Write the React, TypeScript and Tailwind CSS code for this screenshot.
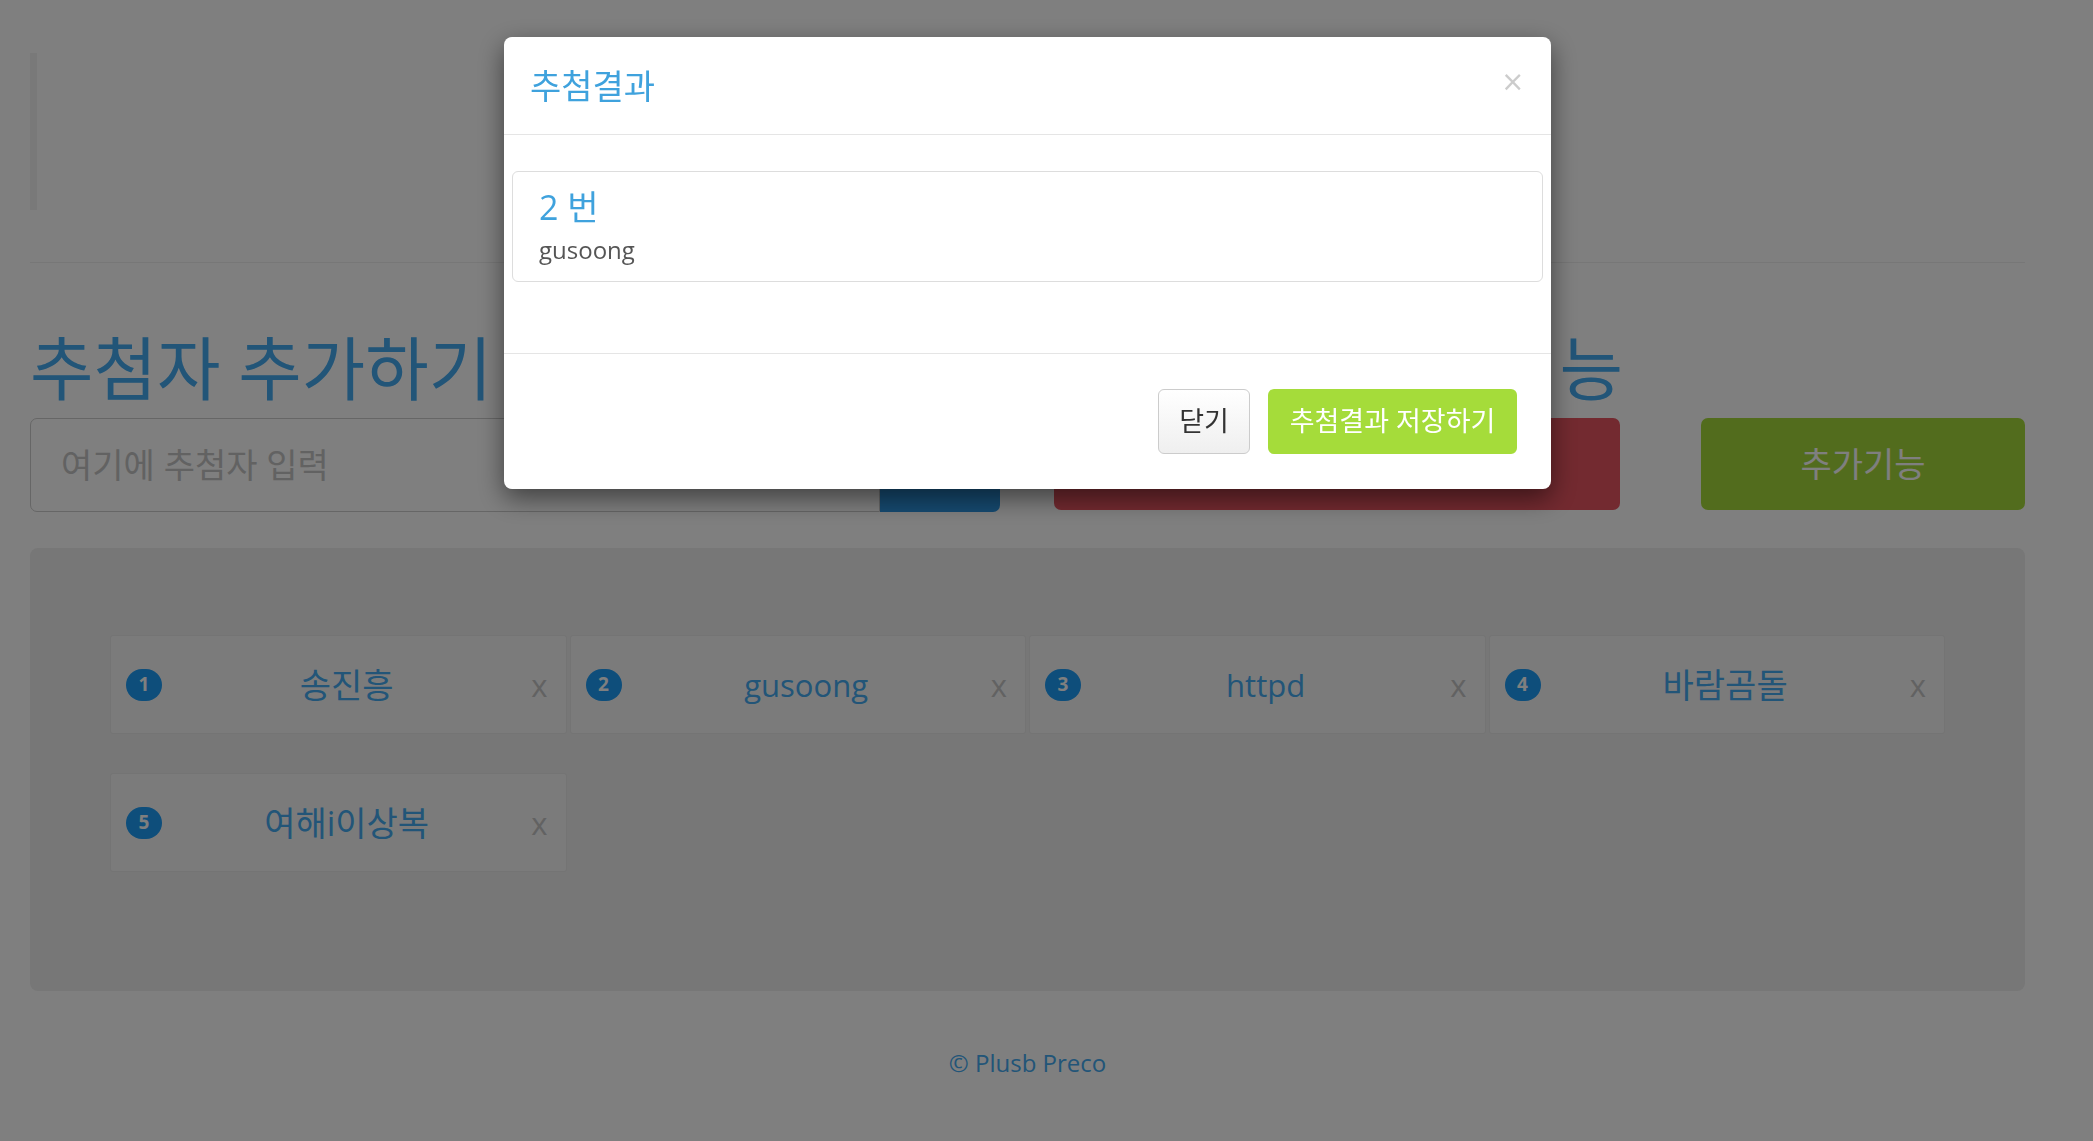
const names = ['송진흥', 'gusoong', 'httpd', '바람곰돌', '여해i이상복']

const hasHangul = (s: string) => /[가-힣]/.test(s)

function NameCard({ index, name }: { index: number; name: string }) {
  return (
    <div className="flex h-[99px] items-center rounded-[3px] border border-[#e8e8e8] bg-[#f7f7f7] pl-[15px] pr-[18px]">
      <span className="flex h-[32px] w-[36px] shrink-0 items-center justify-center rounded-full bg-[#1c9cf6] text-[19px] font-bold text-white">
        {index}
      </span>
      <span
        className={
          hasHangul(name)
            ? 'flex-1 text-center text-[34px] leading-[40px] text-[#44aaf0]'
            : 'flex-1 text-center text-[31px] leading-[40px] text-[#44aaf0]'
        }
      >
        {name}
      </span>
      <span className="text-[31px] leading-[40px] text-[#c4c4c4]">x</span>
    </div>
  )
}

function ResultModal() {
  return (
    <div className="fixed inset-0 z-10 bg-black/50">
      <div className="absolute left-[504px] top-[37px] w-[1047px] rounded-[8px] bg-white shadow-[0_9px_26px_rgba(0,0,0,0.5)]">
        <div className="flex h-[98px] items-center justify-between border-b border-[#e5e5e5] pl-[26px] pr-[28px]">
          <h4 className="text-[34px] leading-[44px] text-[#3fa2dd]">추첨결과</h4>
          <button className="mb-[8px] text-[36px] leading-none text-black/20">×</button>
        </div>
        <div className="px-[8px] pb-[71px] pt-[36px]">
          <div className="h-[111px] rounded-[6px] border border-[#dddddd] px-[26px] pt-[15px]">
            <div className="text-[34px] leading-[40px] text-[#3fa2dd]">2 번</div>
            <div className="mt-[6px] text-[24px] leading-[34px] text-[#555555]">gusoong</div>
          </div>
        </div>
        <div className="flex justify-end gap-[18px] border-t border-[#e5e5e5] pb-[35px] pr-[34px] pt-[35px]">
          <button className="h-[65px] w-[92px] rounded-[6px] border border-[#cccccc] bg-gradient-to-b from-white to-[#efefef] text-[27px] text-[#333333]">
            닫기
          </button>
          <button className="h-[65px] w-[249px] rounded-[6px] bg-[#a5dc3a] text-[27px] text-white">
            추첨결과 저장하기
          </button>
        </div>
      </div>
    </div>
  )
}

export default function App() {
  return (
    <div className="relative min-h-[1141px] bg-white font-['Open_Sans','Noto_Sans_CJK_KR',sans-serif]">
      <div className="pl-[30px] pr-[68px] pt-[53px]">
        <div className="h-[157px] border-l-[7px] border-[#f3f3f3]" />
        <hr className="mt-[52px] border-t border-[#eeeeee]" />

        <div className="mt-[70px] flex">
          <h1 className="w-[971px] text-[69px] leading-[70px] text-[#44aaf0]">추첨자 추가하기</h1>
          <h1 className="ml-[54px] w-[568px] text-right text-[69px] leading-[70px] text-[#44aaf0]">추첨 및 추가기능</h1>
        </div>

        <div className="mt-[15px] flex">
          <div className="flex h-[94px] w-[971px]">
            <input
              className="min-w-0 flex-1 rounded-l-[7px] border border-[#cccccc] px-[30px] text-[34px] text-[#555555] outline-none placeholder:text-[#c4c4c4]"
              placeholder="여기에 추첨자 입력"
            />
            <button className="w-[120px] rounded-r-[7px] bg-[#2c94e0] text-[34px] text-white">추가</button>
          </div>
          <button className="ml-[54px] h-[92px] w-[566px] rounded-[7px] bg-[#e65460] text-[34px] text-white">
            추첨하기
          </button>
          <button className="ml-[81px] h-[92px] w-[324px] rounded-[7px] bg-[#a5d93a] text-[34px] text-white">
            추가기능
          </button>
        </div>

        <div className="mt-[36px] rounded-[8px] bg-[#eeeeee] px-[80px] pb-[119px] pt-[87px]">
          <div className="grid grid-cols-4 gap-x-[3px] gap-y-[39px]">
            {names.map((n, i) => (
              <NameCard key={n} index={i + 1} name={n} />
            ))}
          </div>
        </div>

        <footer className="mt-[55px] text-center text-[24px] leading-[34px] text-[#44aaf0]">© Plusb Preco</footer>
      </div>

      <ResultModal />
    </div>
  )
}
